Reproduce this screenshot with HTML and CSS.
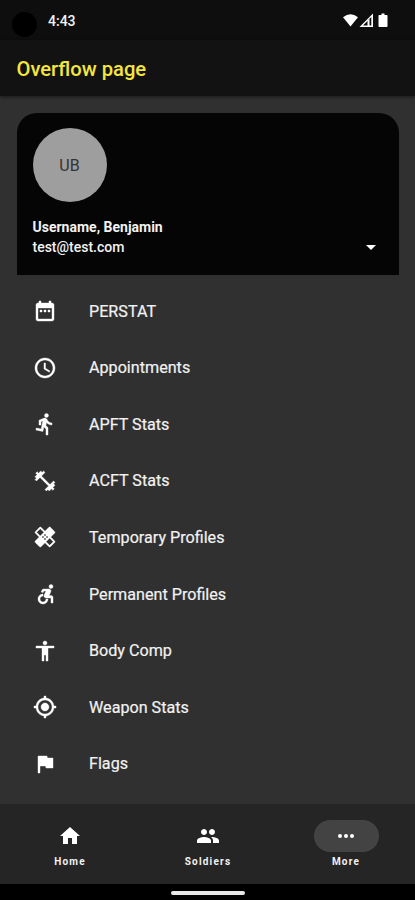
FILE: index.html
```html
<!DOCTYPE html>
<html lang="en">
<head>
<meta charset="utf-8">
<title>Overflow page</title>
<link rel="stylesheet" href="styles.css">
</head>
<body>
<div class="status">
  <span class="camera"></span>
  <span class="clock">4:43</span>
  <svg class="signals" width="46" height="16" viewBox="0 0 46 16"><path d="M0 4.200Q7.500-1.600 15 4.200L7.500 13.500z"/><path fill-rule="evenodd" d="M16.500 14L30 0.500V14zM22.500 12.500H24.500V7.800L26.500 5.500V12.500H28.300V4L20 12.500z"/><path d="M38.500 0.500h3V2h2.300q.7 0 .7.700v10.600q0 .7-.7.700h-7.600q-.7 0-.7-.7V2.700q0-.7.7-.7h2.300z"/></svg>
</div>
<header class="appbar"><h1>Overflow page</h1></header>
<main class="content">
  <section class="account">
    <div class="avatar">UB</div>
    <div class="details">
      <div>
        <div class="name">Username, Benjamin</div>
        <div class="email">test@test.com</div>
      </div>
      <svg class="icon" viewBox="0 0 24 24"><path d="M7 10l5 5 5-5z"/></svg>
    </div>
  </section>
  <ul class="menu">
    <li><svg class="icon" viewBox="0 0 24 24"><path d="M9 11H7v2h2v-2zm4 0h-2v2h2v-2zm4 0h-2v2h2v-2zm2-7h-1V2h-2v2H8V2H6v2H5c-1.110 0-1.990.9-1.990 2L3 20c0 1.100.89 2 2 2h14c1.100 0 2-.9 2-2V6c0-1.100-.9-2-2-2zm0 16H5V9h14v11z"/></svg><span>PERSTAT</span></li>
    <li><svg class="icon" viewBox="0 0 24 24"><path d="M11.990 2C6.470 2 2 6.480 2 12s4.470 10 9.990 10C17.520 22 22 17.520 22 12S17.520 2 11.990 2zM12 20c-4.420 0-8-3.580-8-8s3.580-8 8-8 8 3.580 8 8-3.580 8-8 8z"/><path d="M12.500 7H11v6l5.250 3.150.75-1.230-4.500-2.670z"/></svg><span>Appointments</span></li>
    <li><svg class="icon" viewBox="0 0 24 24"><path d="M13.490 5.480c1.100 0 2-.9 2-2s-.9-2-2-2-2 .9-2 2 .9 2 2 2zm-3.600 13.900l1-4.400 2.100 2v6h2v-7.500l-2.100-2 .6-3c1.300 1.500 3.300 2.500 5.500 2.500v-2c-1.900 0-3.500-1-4.300-2.400l-1-1.600c-.4-.6-1-1-1.700-1-.3 0-.5.1-.8.1l-5.200 2.200v4.700h2v-3.400l1.800-.7-1.600 8.100-4.900-1-.4 2 7 1.400z"/></svg><span>APFT Stats</span></li>
    <li><svg class="icon" viewBox="0 0 24 24"><path d="M20.570 14.860L22 13.430 20.570 12 17 15.570 8.430 7 12 3.430 10.570 2 9.140 3.430 7.710 2 5.570 4.140 4.140 2.710 2.710 4.140l1.430 1.430L2 7.710l1.430 1.430L2 10.570 3.430 12 7 8.430 15.570 17 12 20.570 13.430 22l1.430-1.430L16.290 22l2.140-2.140 1.430 1.430 1.430-1.430-1.430-1.430L22 16.290z"/></svg><span>ACFT Stats</span></li>
    <li><svg class="icon" viewBox="0 0 24 24"><path d="M17.730 12.020l3.980-3.980c.39-.39.39-1.020 0-1.410l-4.340-4.340c-.39-.39-1.020-.39-1.410 0l-3.980 3.980L8 2.290C7.800 2.100 7.550 2 7.290 2c-.25 0-.51.1-.7.29L2.250 6.630c-.39.39-.39 1.020 0 1.410l3.980 3.980L2.250 16c-.39.39-.39 1.020 0 1.410l4.340 4.340c.39.39 1.020.39 1.410 0l3.980-3.980 3.980 3.980c.2.2.45.29.71.29.26 0 .51-.1.71-.29l4.340-4.340c.39-.39.39-1.020 0-1.410l-3.990-3.980zM12 9c.55 0 1 .45 1 1s-.45 1-1 1-1-.45-1-1 .45-1 1-1zm-4.710 1.960L3.660 7.340l3.630-3.630 3.620 3.620-3.620 3.630zM10 13c-.55 0-1-.45-1-1s.45-1 1-1 1 .45 1 1-.45 1-1 1zm2 2c-.55 0-1-.45-1-1s.45-1 1-1 1 .45 1 1-.45 1-1 1zm2-4c.55 0 1 .45 1 1s-.45 1-1 1-1-.45-1-1 .45-1 1-1zm2.660 9.340l-3.630-3.620 3.630-3.630 3.620 3.620-3.620 3.630z"/></svg><span>Temporary Profiles</span></li>
    <li><svg class="icon" viewBox="0 0 24 24"><circle cx="18" cy="4.540" r="2"/><path d="M15 17h-2c0 1.650-1.350 3-3 3s-3-1.350-3-3 1.350-3 3-3v-2c-2.760 0-5 2.240-5 5s2.240 5 5 5 5-2.240 5-5zm3-3.500h-1.860l1.670-3.670C18.420 8.500 17.440 7 15.960 7h-5.200c-.81 0-1.540.47-1.870 1.200L8.220 10l1.920.53.65-1.530H13l-1.830 4.100c-.6 1.330.39 2.900 1.850 2.900H18v5h2v-5.500c0-1.100-.9-2-2-2z"/></svg><span>Permanent Profiles</span></li>
    <li><svg class="icon" viewBox="0 0 24 24"><path d="M12 2c1.100 0 2 .9 2 2s-.9 2-2 2-2-.9-2-2 .9-2 2-2zm9 7h-6v13h-2v-6h-2v6H9V9H3V7h18v2z"/></svg><span>Body Comp</span></li>
    <li><svg class="icon" viewBox="0 0 24 24"><path d="M12 8c-2.210 0-4 1.790-4 4s1.790 4 4 4 4-1.790 4-4-1.790-4-4-4zm8.940 3c-.46-4.170-3.770-7.480-7.940-7.940V1h-2v2.060C6.830 3.520 3.520 6.830 3.060 11H1v2h2.060c.46 4.170 3.770 7.480 7.940 7.940V23h2v-2.060c4.170-.46 7.480-3.770 7.940-7.940H23v-2h-2.060zM12 19c-3.870 0-7-3.130-7-7s3.130-7 7-7 7 3.130 7 7-3.130 7-7 7z"/></svg><span>Weapon Stats</span></li>
    <li><svg class="icon" viewBox="0 0 24 24"><path d="M14.400 6L14 4H5v17h2v-7h5.600l.4 2h7V6z"/></svg><span>Flags</span></li>
  </ul>
</main>
<nav class="tabs">
  <a class="tab"><span class="pill"><svg class="icon" viewBox="0 0 24 24"><path d="M10 20v-6h4v6h5v-8h3L12 3 2 12h3v8z"/></svg></span><span>Home</span></a>
  <a class="tab"><span class="pill"><svg class="icon" viewBox="0 0 24 24"><path d="M16 11c1.660 0 2.990-1.340 2.990-3S17.660 5 16 5s-3 1.340-3 3 1.340 3 3 3zm-8 0c1.660 0 2.990-1.340 2.990-3S9.660 5 8 5 5 6.340 5 8s1.340 3 3 3zm0 2c-2.330 0-7 1.170-7 3.500V19h14v-2.500c0-2.330-4.670-3.500-7-3.500zm8 0c-.29 0-.62.02-.97.05 1.160.84 1.970 1.970 1.970 3.450V19h6v-2.500c0-2.330-4.670-3.500-7-3.500z"/></svg></span><span>Soldiers</span></a>
  <a class="tab active"><span class="pill"><svg class="icon" viewBox="0 0 24 24"><circle cx="6" cy="12" r="2"/><circle cx="12" cy="12" r="2"/><circle cx="18" cy="12" r="2"/></svg></span><span>More</span></a>
</nav>
<div class="gesture"><span></span></div>
</body>
</html>
```
FILE: styles.css
```css
* { box-sizing: border-box; }
body {
  margin: 0;
  height: 900px;
  overflow: hidden;
  display: flex;
  flex-direction: column;
  background: #303030;
  color: #f2f2f2;
  font-family: Roboto, "Liberation Sans", sans-serif;
}
.icon { display: block; width: 24px; height: 24px; fill: #fff; flex: none; }
.status {
  height: 40px;
  flex: none;
  display: flex;
  align-items: flex-start;
  background: #0e0e0e;
}
.camera { width: 25px; height: 25px; margin: 12px 0 0 12px; border-radius: 50%; background: #000; }
.clock { margin: 12px 0 0 11px; font-size: 14px; line-height: 18px; font-weight: 500; }
.signals { margin: 13px 26px 0 auto; fill: #fff; }
.appbar {
  height: 56px;
  flex: none;
  display: flex;
  align-items: center;
  padding: 0 17px 0 16.500px;
  background: #121212;
  box-shadow: 0 1px 3px rgba(0, 0, 0, .5);
}
h1 { margin: 0; padding-top: 2px; font-size: 20.200px; line-height: 24px; font-weight: 500; color: #f5e63d; }
.content { flex: 1; padding: 17px 16px 0 17px; }
.account {
  height: 162px;
  padding: 15px 16px 0 15.500px;
  border-radius: 20px 20px 0 0;
  background: #050505;
}
.avatar {
  width: 74px;
  height: 74px;
  border-radius: 50%;
  display: flex;
  align-items: center;
  justify-content: center;
  background: #9e9e9e;
  color: #333;
  font-size: 16px;
}
.details { display: flex; align-items: flex-end; justify-content: space-between; margin-top: 15px; }
.details .icon { margin-bottom: -2px; }
.name, .email { font-size: 14px; line-height: 20px; }
.name { font-weight: 700; }
.email { font-weight: 500; }
.menu { list-style: none; margin: 8px 0 0; padding: 0 16px; }
.menu li { height: 56.550px; display: flex; align-items: center; gap: 32px; font-size: 16.150px; }
.menu .icon { stroke: #fff; stroke-width: .4px; }
.menu span { -webkit-text-stroke: .2px #f2f2f2; }
.tabs { height: 80px; flex: none; display: flex; padding-left: 1px; background: #252525; }
.tab {
  flex: 1;
  display: flex;
  flex-direction: column;
  align-items: center;
  padding-top: 16px;
  font-size: 10px;
  line-height: 12px;
  font-weight: 700;
  letter-spacing: 1.200px;
}
.pill {
  width: 65px;
  height: 32px;
  margin-bottom: 4px;
  border-radius: 16px;
  display: flex;
  align-items: center;
  justify-content: center;
}
.active .pill { background: #434343; }
.gesture { height: 16px; flex: none; display: flex; justify-content: center; background: #000; }
.gesture span { width: 74px; height: 4px; margin-top: 7px; border-radius: 2px; background: #e8e8e8; }
```
